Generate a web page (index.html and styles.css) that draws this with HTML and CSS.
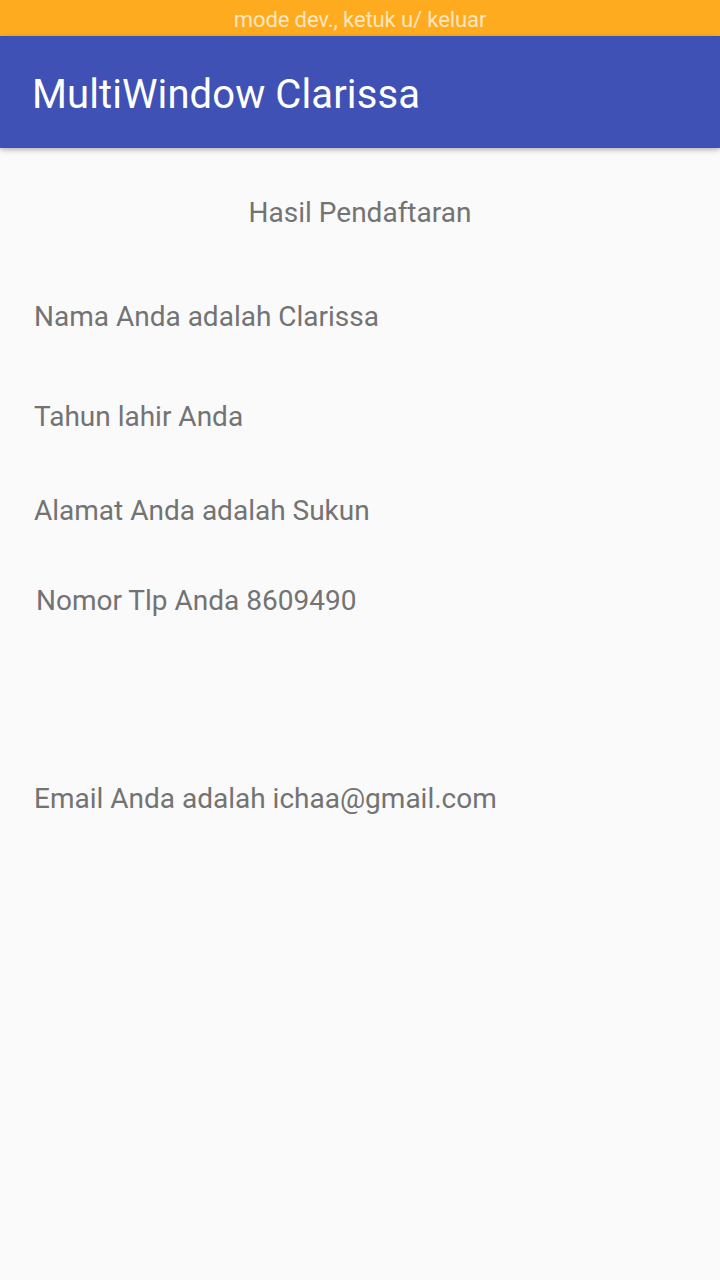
FILE: index.html
```html
<!DOCTYPE html>
<html>
<head>
<meta charset="utf-8">
<link rel="stylesheet" href="styles.css">
</head>
<body>
<div class="status">mode dev., ketuk u/ keluar</div>
<header class="toolbar">MultiWindow Clarissa</header>
<main class="content">
  <p class="heading">Hasil Pendaftaran</p>
  <p class="line nama">Nama Anda adalah Clarissa</p>
  <p class="line tahun">Tahun lahir Anda</p>
  <p class="line alamat">Alamat Anda adalah Sukun</p>
  <p class="line nomor">Nomor Tlp Anda 8609490</p>
  <p class="line email">Email Anda adalah ichaa@gmail.com</p>
</main>
</body>
</html>
```

FILE: styles.css
```css
html, body {
  margin: 0;
  padding: 0;
}
body {
  width: 720px;
  height: 1280px;
  background: #fafafa;
  font-family: Roboto, "Noto Sans", sans-serif;
  overflow: hidden;
}
.status {
  height: 36px;
  background: #ffab20;
  color: #ffe6c0;
  font-size: 22px;
  line-height: 40px;
  text-align: center;
  letter-spacing: -0.1px;
}
.toolbar {
  position: relative;
  z-index: 1;
  height: 112px;
  background: #3f51b5;
  color: #ffffff;
  font-size: 40px;
  line-height: 118px;
  padding-left: 32px;
  letter-spacing: 0.1px;
  box-shadow: 0 2px 5px rgba(0, 0, 0, 0.28);
}
.content {
  display: flex;
  flex-direction: column;
  padding: 0 34px;
}
.content p {
  margin: 0;
  color: #737373;
  font-size: 28px;
  line-height: 28px;
}
.heading {
  text-align: center;
  margin-top: 51px !important;
}
.nama { margin-top: 76px !important; }
.tahun { margin-top: 72px !important; }
.alamat { margin-top: 66px !important; }
.nomor { margin-top: 62px !important; padding-left: 2px; }
.email { margin-top: 170px !important; }
```
